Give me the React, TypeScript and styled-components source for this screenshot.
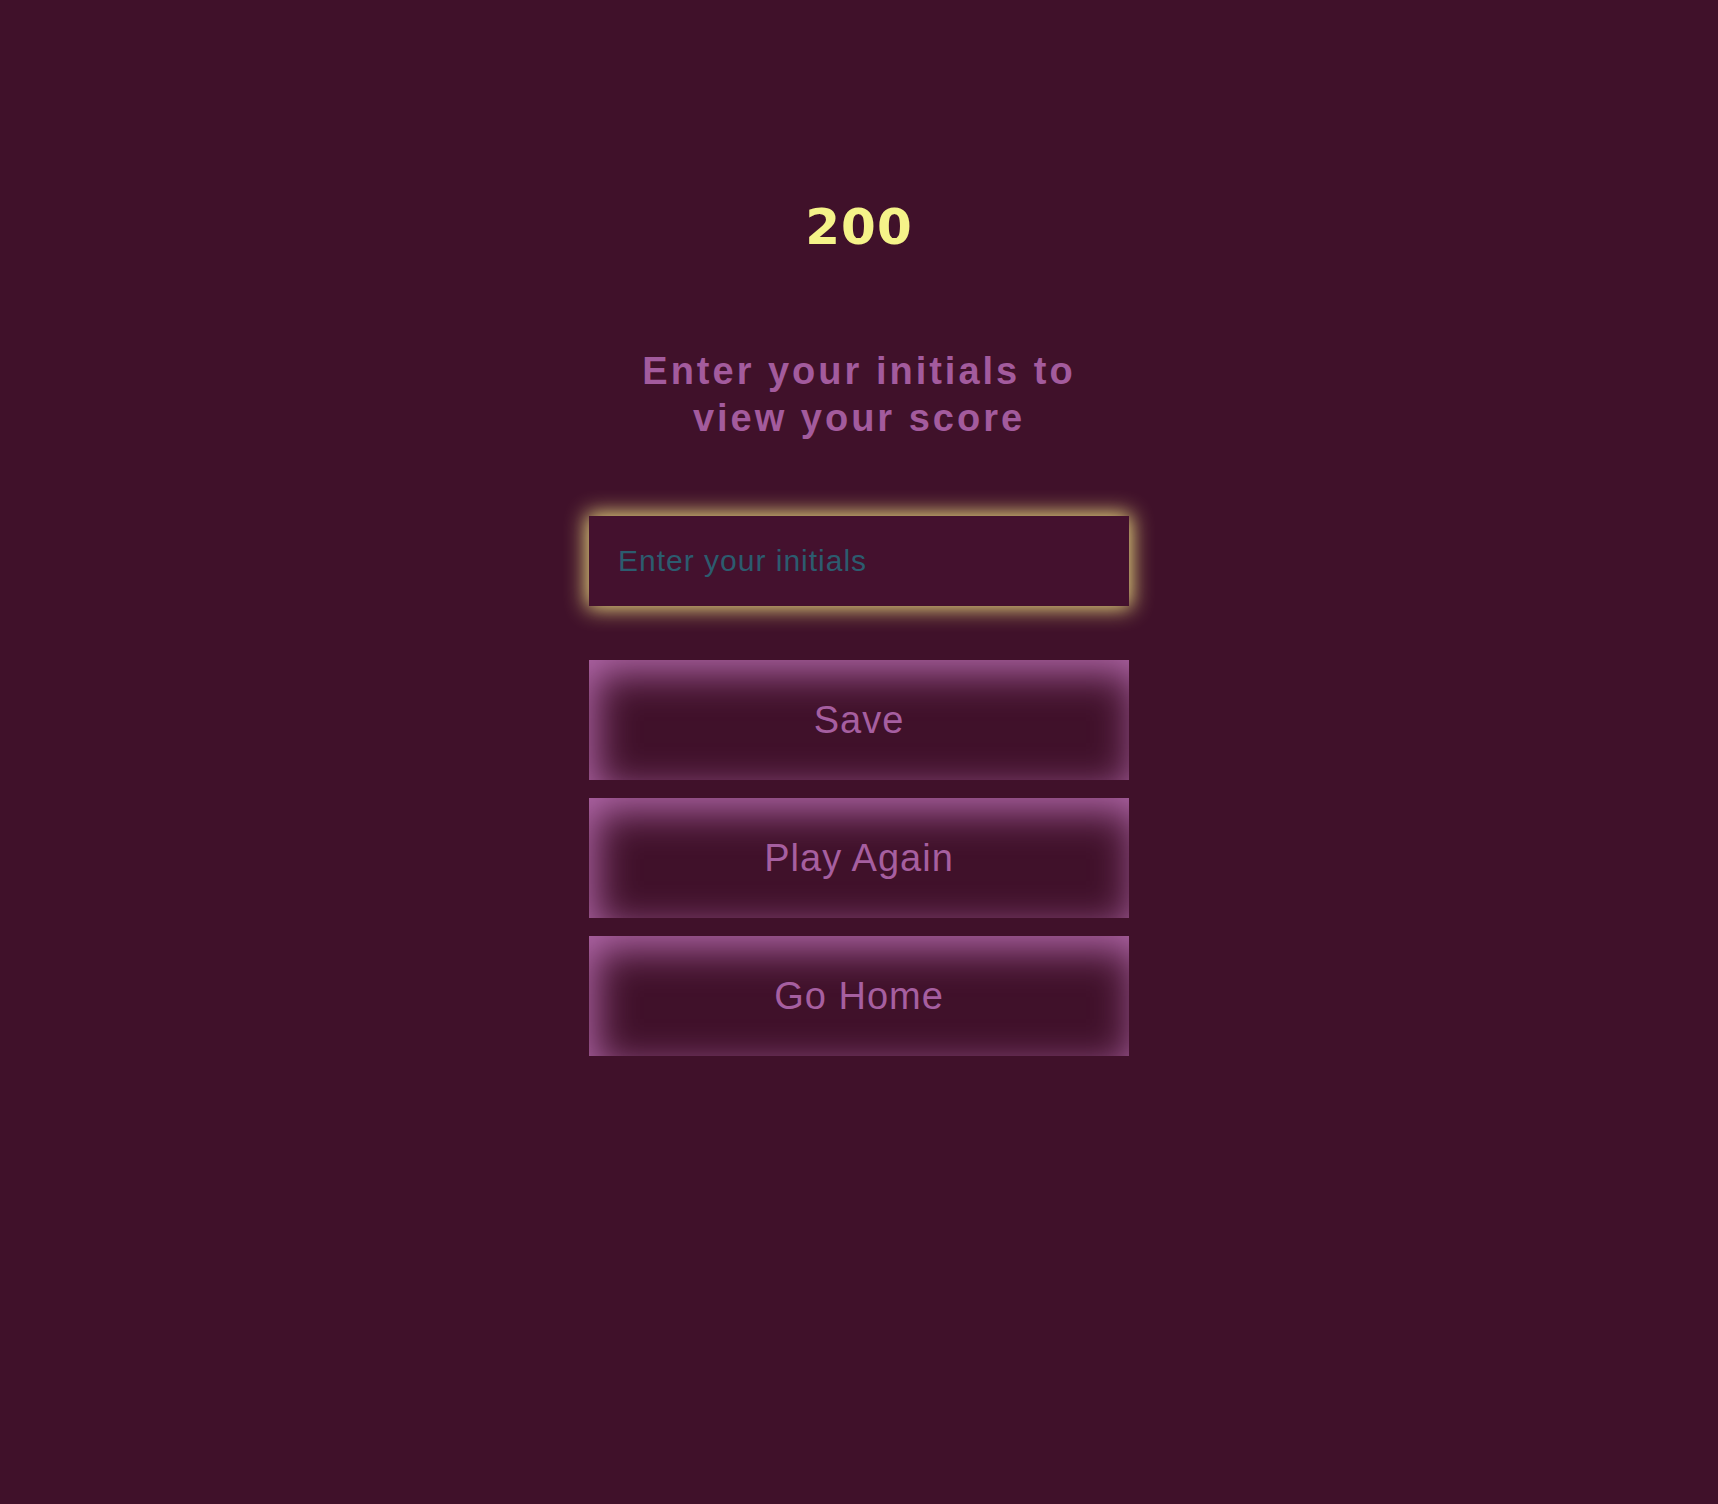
import React from "react";
import styled, { createGlobalStyle } from "styled-components";

const GlobalStyle = createGlobalStyle`
  html, body {
    margin: 0;
    padding: 0;
    background: #40112a;
  }
  body {
    font-family: "Liberation Sans", Arial, sans-serif;
  }
  * {
    box-sizing: border-box;
  }
`;

const Page = styled.main`
  min-height: 100vh;
  display: flex;
  flex-direction: column;
  align-items: center;
  padding-top: 197px;
  background: #40112a;
`;

const Score = styled.h1`
  margin: 0;
  font-family: "DejaVu Sans", "Liberation Sans", sans-serif;
  font-weight: 700;
  font-size: 50px;
  line-height: 60px;
  letter-spacing: 1px;
  color: #f5f389;
`;

const Prompt = styled.h2`
  margin: 91px 0 0;
  max-width: 440px;
  text-align: center;
  font-family: "Liberation Sans", Arial, sans-serif;
  font-weight: 700;
  font-size: 38px;
  line-height: 47px;
  letter-spacing: 3px;
  color: #a35b9d;
`;

const Form = styled.form`
  width: 540px;
  margin-top: 74px;
  display: flex;
  flex-direction: column;
`;

const InitialsInput = styled.input`
  width: 100%;
  height: 90px;
  padding: 0 29px;
  border: none;
  outline: none;
  background: #44112e;
  box-shadow: 0 0 20px 2px rgba(255, 244, 138, 0.95);
  font-family: "Liberation Sans", Arial, sans-serif;
  font-size: 30px;
  letter-spacing: 1px;
  color: #f5f389;

  &::placeholder {
    color: #2c5c6f;
    opacity: 1;
  }
`;

const ButtonStack = styled.div`
  margin-top: 54px;
  display: flex;
  flex-direction: column;
  gap: 18px;
`;

const ActionButton = styled.button`
  width: 100%;
  height: 120px;
  border: none;
  background: #40112a;
  box-shadow: inset 6px 12px 40px rgb(180, 105, 172);
  font-family: "Liberation Sans", Arial, sans-serif;
  font-size: 38px;
  letter-spacing: 1px;
  color: #a65fa0;
  cursor: pointer;
`;

export default function App() {
  return (
    <>
      <GlobalStyle />
      <Page>
        <Score>200</Score>
        <Prompt>Enter your initials to view your score</Prompt>
        <Form onSubmit={(e) => e.preventDefault()}>
          <InitialsInput type="text" placeholder="Enter your initials" />
          <ButtonStack>
            <ActionButton type="submit">Save</ActionButton>
            <ActionButton type="button">Play Again</ActionButton>
            <ActionButton type="button">Go Home</ActionButton>
          </ButtonStack>
        </Form>
      </Page>
    </>
  );
}
